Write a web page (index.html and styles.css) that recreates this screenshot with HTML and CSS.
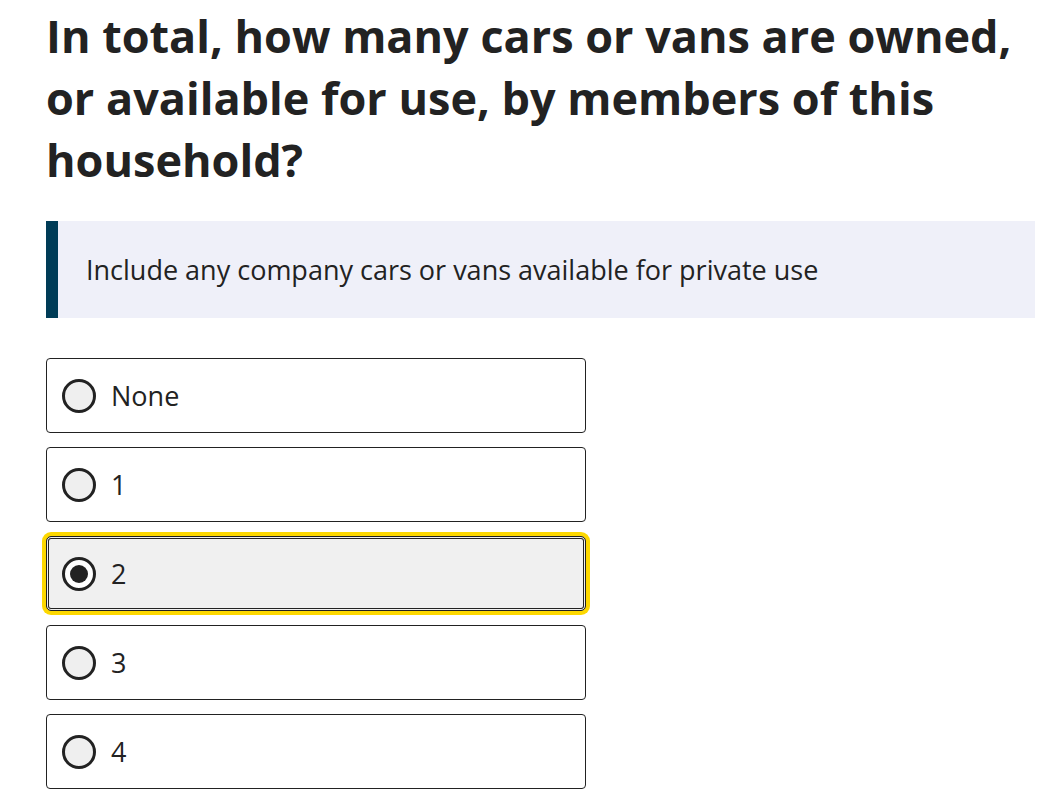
FILE: index.html
```html
<!DOCTYPE html>
<html lang="en">
<head>
<meta charset="utf-8">
<title>Cars or vans</title>
<link rel="stylesheet" href="styles.css">
</head>
<body>
<main class="page">
  <h1 class="question">In total, how many cars or vans are owned, or available for use, by members of this household?</h1>
  <div class="panel">
    <p class="panel-text">Include any company cars or vans available for private use</p>
  </div>
  <fieldset class="options">
    <label class="option">
      <input type="radio" name="cars" class="radio">
      <span class="option-label">None</span>
    </label>
    <label class="option">
      <input type="radio" name="cars" class="radio">
      <span class="option-label">1</span>
    </label>
    <label class="option option-selected">
      <input type="radio" name="cars" class="radio" checked>
      <span class="option-label">2</span>
    </label>
    <label class="option">
      <input type="radio" name="cars" class="radio">
      <span class="option-label">3</span>
    </label>
    <label class="option">
      <input type="radio" name="cars" class="radio">
      <span class="option-label">4</span>
    </label>
  </fieldset>
</main>
</body>
</html>
```
FILE: styles.css
```css
* { box-sizing: border-box; }
html, body {
  margin: 0;
  padding: 0;
  background: #fff;
}
body {
  font-family: "Open Sans", "Noto Sans", sans-serif;
  color: #222;
}
.page {
  padding: 5px 20px 0 46px;
}
.question {
  margin: 0;
  font-size: 45px;
  line-height: 62px;
  font-weight: 700;
  color: #222;
  max-width: 990px;
}
.panel {
  margin-top: 30px;
  background: #eff0f9;
  border-left: 12px solid #003c57;
  padding: 28px 28px;
}
.panel-text {
  margin: 0;
  font-size: 27px;
  line-height: 41px;
}
.options {
  margin: 40px 0 0;
  padding: 0;
  border: 0;
  display: flex;
  flex-direction: column;
  gap: 14px;
  width: 540px;
}
.option {
  display: flex;
  align-items: center;
  gap: 15px;
  height: 75px;
  padding: 0 15px;
  border: 1px solid #222;
  border-radius: 4px;
  background: #fff;
}
.option-label {
  font-size: 27px;
  line-height: 41px;
}
.radio {
  appearance: none;
  -webkit-appearance: none;
  margin: 0;
  width: 34px;
  height: 34px;
  flex: 0 0 34px;
  border: 3px solid #222;
  border-radius: 50%;
  background: #efefef;
  position: relative;
}
.radio:checked {
  background: #fff;
}
.radio:checked::after {
  content: "";
  position: absolute;
  left: 5px;
  top: 5px;
  width: 18px;
  height: 18px;
  border-radius: 50%;
  background: #222;
}
.option-selected {
  background: #f0f0f0;
  box-shadow: inset 0 0 0 1px #f0f0f0, inset 0 0 0 2px #222, 0 0 0 4px #fdd800;
  border-radius: 5px;
}
```
